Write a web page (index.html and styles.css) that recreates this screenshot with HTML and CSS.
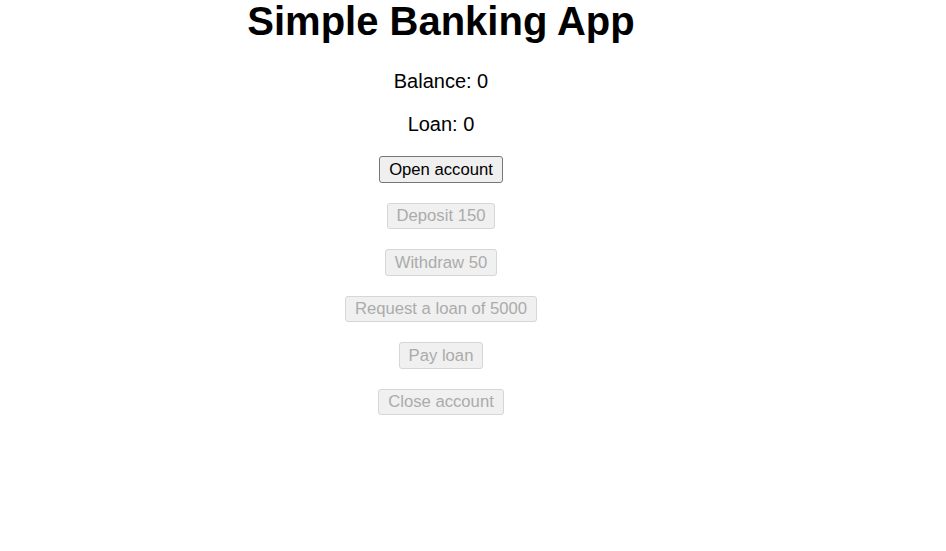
FILE: index.html
```html
<!DOCTYPE html>
<html lang="en">
<head>
<meta charset="utf-8">
<title>Simple Banking App</title>
<link rel="stylesheet" href="styles.css">
</head>
<body>
  <div class="app">
    <h1 class="title">Simple Banking App</h1>
    <p class="stat">Balance: 0</p>
    <p class="stat">Loan: 0</p>
    <div class="actions">
      <button class="btn">Open account</button>
      <button class="btn" disabled>Deposit 150</button>
      <button class="btn" disabled>Withdraw 50</button>
      <button class="btn" disabled>Request a loan of 5000</button>
      <button class="btn" disabled>Pay loan</button>
      <button class="btn" disabled>Close account</button>
    </div>
  </div>
</body>
</html>
```

FILE: styles.css
```css
html, body {
  margin: 0;
  padding: 0;
  background: #ffffff;
}

body {
  font-family: "Liberation Sans", Arial, sans-serif;
  color: #000;
}

.app {
  width: 882px;
  text-align: center;
}

.title {
  margin: 0 0 29px 0;
  padding-top: 1px;
  font-size: 40px;
  line-height: 40px;
  font-weight: bold;
}

.stat {
  margin: 0 0 20px 0;
  font-size: 20px;
  line-height: 23px;
}

.actions {
  display: flex;
  flex-direction: column;
  align-items: center;
  gap: 20px;
}

.btn {
  font-family: "Liberation Sans", Arial, sans-serif;
  font-size: 16.67px;
  line-height: 18.6px;
  padding: 3.6px 9px 2.4px;
  border: 1px solid #767676;
  border-radius: 3px;
  background: #efefef;
  color: #000;
  margin: 0;
}

.btn:disabled {
  background: #f0f0f0;
  border-color: #d6d6d6;
  color: #ababab;
}
```
